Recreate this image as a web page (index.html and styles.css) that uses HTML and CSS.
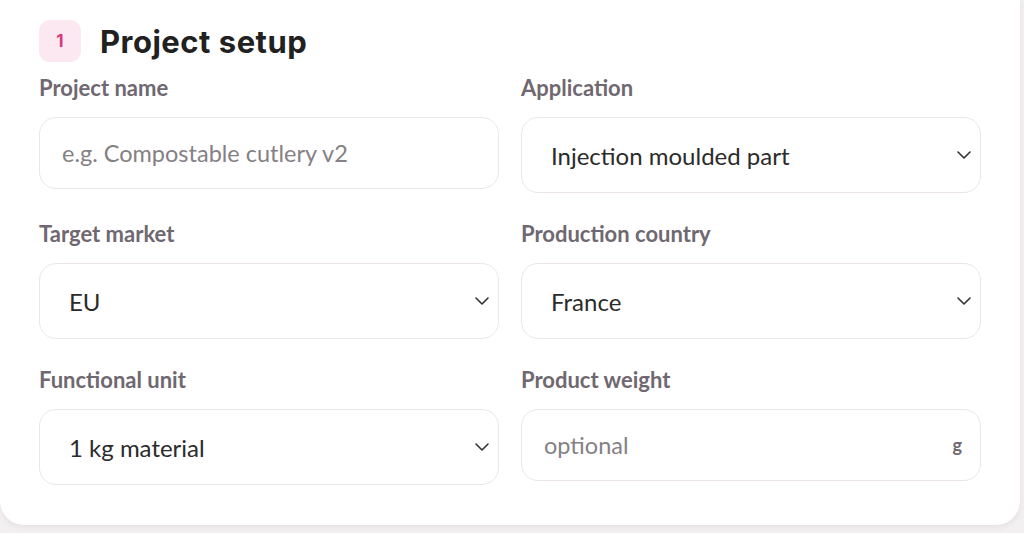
FILE: index.html
```html
<!DOCTYPE html>
<html lang="en">
<head>
<meta charset="utf-8">
<title>Project setup</title>
<link rel="stylesheet" href="styles.css">
</head>
<body>
<main class="page">
  <section class="card">
    <header class="card-head">
      <span class="step">1</span>
      <h2 class="card-title">Project setup</h2>
    </header>
    <div class="form-grid">
      <label class="field">
        <span class="field-label">Project name</span>
        <span class="control">
          <input class="input" type="text" placeholder="e.g. Compostable cutlery v2">
        </span>
      </label>
      <label class="field">
        <span class="field-label">Application</span>
        <span class="control control-select">
          <select class="select">
            <option>Injection moulded part</option>
          </select>
          <svg class="chevron" width="14" height="8" viewBox="0 0 14 8" aria-hidden="true"><path d="M1 1l6 6 6-6" fill="none" stroke="#333" stroke-width="1.6" stroke-linecap="round" stroke-linejoin="round"/></svg>
        </span>
      </label>
      <label class="field">
        <span class="field-label">Target market</span>
        <span class="control control-select">
          <select class="select">
            <option>EU</option>
          </select>
          <svg class="chevron" width="14" height="8" viewBox="0 0 14 8" aria-hidden="true"><path d="M1 1l6 6 6-6" fill="none" stroke="#333" stroke-width="1.6" stroke-linecap="round" stroke-linejoin="round"/></svg>
        </span>
      </label>
      <label class="field">
        <span class="field-label">Production country</span>
        <span class="control control-select">
          <select class="select">
            <option>France</option>
          </select>
          <svg class="chevron" width="14" height="8" viewBox="0 0 14 8" aria-hidden="true"><path d="M1 1l6 6 6-6" fill="none" stroke="#333" stroke-width="1.6" stroke-linecap="round" stroke-linejoin="round"/></svg>
        </span>
      </label>
      <label class="field">
        <span class="field-label">Functional unit</span>
        <span class="control control-select">
          <select class="select">
            <option>1 kg material</option>
          </select>
          <svg class="chevron" width="14" height="8" viewBox="0 0 14 8" aria-hidden="true"><path d="M1 1l6 6 6-6" fill="none" stroke="#333" stroke-width="1.6" stroke-linecap="round" stroke-linejoin="round"/></svg>
        </span>
      </label>
      <label class="field">
        <span class="field-label">Product weight</span>
        <span class="control control-unit">
          <input class="input input-unit" type="text" placeholder="optional">
          <span class="unit">g</span>
        </span>
      </label>
    </div>
  </section>
</main>
</body>
</html>
```

FILE: styles.css
```css
* {
  box-sizing: border-box;
}

html,
body {
  margin: 0;
  background: #f3f0f2;
}

body {
  font-family: "Lato", "Open Sans", sans-serif;
  color: #2b2b2b;
}

.page {
  padding: 0 4px 7px 0;
}

.card {
  background: #ffffff;
  border-radius: 0 0 24px 24px;
  box-shadow: 0 2px 6px rgba(60, 40, 50, 0.08);
  padding: 20px 39px 40px 39px;
}

.card-head {
  display: flex;
  align-items: center;
  gap: 19px;
  margin-bottom: 12px;
}

.step {
  width: 42px;
  height: 42px;
  border-radius: 11px;
  background: #fbe8f1;
  color: #d6397c;
  font-family: "Inter", sans-serif;
  font-weight: 700;
  font-size: 17px;
  display: flex;
  align-items: center;
  justify-content: center;
}

.card-title {
  margin: 0;
  font-family: "Inter", sans-serif;
  font-weight: 700;
  font-size: 31px;
  color: #212121;
  letter-spacing: 0.5px;
}

.form-grid {
  display: grid;
  grid-template-columns: 1fr 1fr;
  column-gap: 22px;
  row-gap: 27px;
}

.field {
  display: flex;
  flex-direction: column;
  gap: 15px;
}

.field-label {
  font-size: 22px;
  line-height: 28px;
  font-weight: 700;
  color: #6f6870;
}

.control {
  position: relative;
  display: block;
}

.input,
.select {
  display: block;
  width: 100%;
  margin: 0;
  font-family: inherit;
  font-size: 24px;
  color: #2b2b2b;
  background: #ffffff;
  border: 1.5px solid #ece6e9;
  border-radius: 17px;
  outline: none;
}

.input {
  height: 72px;
  padding: 0 22px;
  font-size: 23.5px;
}

.input::placeholder {
  color: #858085;
}

.select {
  height: 76px;
  padding: 0 40px 0 29px;
  appearance: none;
  -webkit-appearance: none;
}

.chevron {
  position: absolute;
  right: 10px;
  top: 50%;
  transform: translateY(-50%);
  pointer-events: none;
}

.input-unit {
  padding-right: 48px;
}

.unit {
  position: absolute;
  right: 19px;
  top: 50%;
  transform: translateY(-50%);
  font-size: 18px;
  font-weight: 700;
  color: #6f6870;
}
```
